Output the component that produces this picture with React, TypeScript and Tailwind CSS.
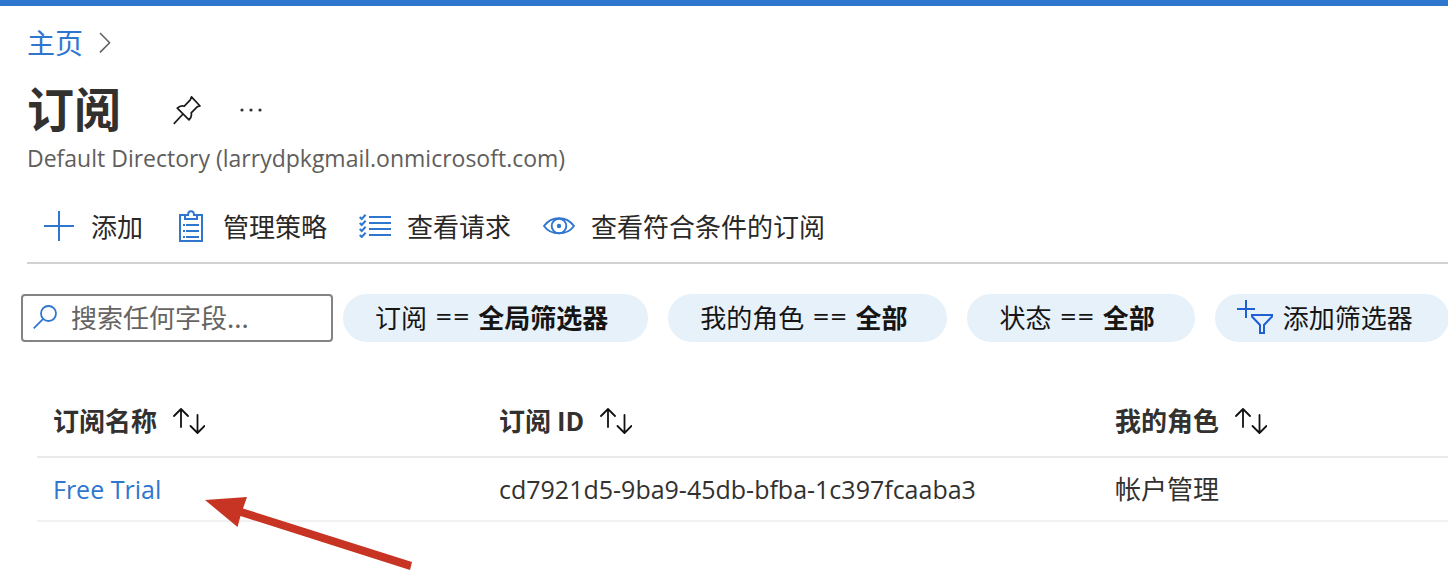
import type { ReactNode } from "react";

const sans = "font-['Open_Sans','Noto_Sans_CJK_SC',sans-serif]";
const cjk = "font-['Noto_Sans_CJK_SC',sans-serif]";

function PinIcon() {
  return (
    <svg width="28" height="30" viewBox="0 0 28 30" fill="none" stroke="#1b1a19" strokeWidth="1.7" strokeLinejoin="round" aria-hidden="true">
      <path d="M18.5 1.8 27 11l-2.6.6-6.2 6.3c.7 2.4.1 4.6-2.200 7L4.300 13.200c2-2 4.400-2.800 7-2l6-6.400z" />
      <path d="M10 19 .8 28.800" />
    </svg>
  );
}

function PlusIcon() {
  return (
    <svg width="30" height="30" viewBox="0 0 30 30" aria-hidden="true">
      <path d="M14 0h2v14h14v2H16v14h-2V16H0v-2h14z" fill="#2f76cf" />
    </svg>
  );
}

function ClipboardIcon() {
  return (
    <svg width="24" height="32" viewBox="0 0 24 32" fill="none" stroke="#2f76cf" strokeWidth="2" aria-hidden="true">
      <path d="M6 5H1v26h22V5h-5" />
      <path d="M6 9V5h3c0-5 6-5 6 0h3v4z" />
      <path d="M4 15h2m1 0h13M4 21h2m1 0h13M4 27h2m1 0h13" />
    </svg>
  );
}

function ChecklistIcon() {
  return (
    <svg width="32" height="24" viewBox="0 0 32 24" fill="none" stroke="#2f76cf" strokeWidth="2" aria-hidden="true">
      <path d="M10 3h22M10 9h22M10 15h22M10 21h22" />
      <path d="m.7 3 2 2L6.600.8M.7 9l2 2 3.900-4.200M.7 15l2 2 3.900-4.200M.7 21l2 2 3.900-4.200" strokeWidth="2" />
    </svg>
  );
}

function EyeIcon() {
  return (
    <svg width="32" height="18" viewBox="0 0 32 18" fill="none" stroke="#2f76cf" strokeWidth="1.900" aria-hidden="true">
      <path d="M1 9C5 3.500 10 1.200 16 1.200S27 3.500 31 9c-4 5.500-9 7.400-15 7.400S5 14.500 1 9z" />
      <circle cx="16" cy="9" r="7.300" />
      <circle cx="16" cy="9" r="2.200" fill="#2f76cf" stroke="none" />
    </svg>
  );
}

function SearchIcon() {
  return (
    <svg width="24" height="24" viewBox="0 0 24 24" fill="none" stroke="#2f76cf" strokeWidth="1.800" aria-hidden="true">
      <circle cx="15.500" cy="8.500" r="7.500" />
      <path d="M10.200 13.800.7 23.300" />
    </svg>
  );
}

function AddFilterIcon() {
  return (
    <svg width="36" height="34" viewBox="0 0 36 34" fill="none" stroke="#1f5fd6" strokeWidth="2" aria-hidden="true">
      <path d="M9 0v18M0 9h18" />
      <path d="M15 15h20v1.500l-8 8.500v8h-4v-8l-8-8.500z" />
    </svg>
  );
}

function SortIcon() {
  return (
    <svg width="32" height="26" viewBox="0 0 32 26" fill="none" stroke="#111" strokeWidth="1.800" strokeLinecap="round" strokeLinejoin="round" aria-hidden="true">
      <path d="M8 19V1.200M1 8l7-7 7 7" />
      <path d="M24.500 7v17.700M17.500 18l7 7 7-7" />
    </svg>
  );
}

function Command({ icon, label }: { icon: ReactNode; label: string }) {
  return (
    <button type="button" className="flex shrink-0 items-center gap-4 text-[26px] leading-8 text-[#292827]">
      <span className="flex w-8 justify-center">{icon}</span>
      <span>{label}</span>
    </button>
  );
}

function Filter({ name, value }: { name: string; value: string }) {
  return (
    <button type="button" className="mr-5 flex h-12 shrink-0 items-center gap-2 rounded-full bg-[#e7f1fa] pr-10 pb-[2px] pl-8 text-[26px] leading-8 whitespace-nowrap text-[#161514]">
      <span>{name}</span>
      <span className="font-['DejaVu_Sans',sans-serif] text-[21px]">==</span>
      <b className="font-bold">{value}</b>
    </button>
  );
}

function HeaderCell({ label }: { label: string }) {
  return (
    <th scope="col" className="h-[72px] pl-4 text-left font-bold">
      <button type="button" className="flex items-center gap-4 leading-8">
        <span className="pb-[2px]">{label}</span>
        <SortIcon />
      </button>
    </th>
  );
}

export default function App() {
  return (
    <div className={`relative min-h-screen overflow-hidden bg-white text-[#323130] ${cjk}`}>
      <div className="h-[6px] bg-[#2f76cf]" />

      <nav aria-label="Breadcrumb" className="mt-5 flex items-center gap-4 pl-[27px]">
        <a href="#home" className="text-[28px] leading-8 text-[#2f76cf]">主页</a>
        <svg width="12" height="22" viewBox="0 0 12 22" fill="none" stroke="#605e5c" strokeWidth="1.500" aria-hidden="true">
          <path d="m1 2 9.600 9.700L1 21.400" />
        </svg>
      </nav>

      <header className="pl-[27px]">
        <div className="mt-5 flex h-16 items-center">
          <h1 className="pb-[6px] text-[47px] leading-[58px] font-bold">订阅</h1>
          <button type="button" aria-label="Pin" className="ml-[52px]">
            <PinIcon />
          </button>
          <button type="button" aria-label="More" className="ml-[39px]">
            <svg width="22" height="4" viewBox="0 0 22 4" fill="#323130" aria-hidden="true">
              <circle cx="2" cy="2" r="1.600" />
              <circle cx="11" cy="2" r="1.600" />
              <circle cx="20" cy="2" r="1.600" />
            </svg>
          </button>
        </div>
        <p className={`text-[23px] leading-8 text-[#605e5c] ${sans}`}>Default Directory (larrydpkgmail.onmicrosoft.com)</p>
      </header>

      <div role="toolbar" className="mt-4 ml-[27px] flex h-[74px] items-center gap-8 border-b-2 border-[#d2d2d2] pl-4">
        <Command icon={<PlusIcon />} label="添加" />
        <Command icon={<ClipboardIcon />} label="管理策略" />
        <Command icon={<ChecklistIcon />} label="查看请求" />
        <Command icon={<EyeIcon />} label="查看符合条件的订阅" />
      </div>

      <div className="mt-[30px] flex pl-[21px]">
        <label className="mr-[10px] flex h-12 w-[312px] shrink-0 items-center gap-[14px] rounded border-2 border-[#858381] pb-[2px] pl-[10px]">
          <SearchIcon />
          <input type="text" aria-label="搜索" placeholder="搜索任何字段..." className="min-w-0 flex-1 text-[26px] leading-8 outline-none placeholder:text-[#666462]" />
        </label>
        <Filter name="订阅" value="全局筛选器" />
        <Filter name="我的角色" value="全部" />
        <Filter name="状态" value="全部" />
        <button type="button" className="flex h-12 shrink-0 items-center gap-[10px] rounded-full bg-[#e7f1fa] pr-9 pb-[2px] pl-[22px] text-[26px] leading-8 text-[#161514]">
          <AddFilterIcon />
          <span>添加筛选器</span>
        </button>
      </div>

      <div className="mt-[43px] pl-[37px]">
        <table className="w-full table-fixed border-collapse text-[26px] leading-8">
          <colgroup>
            <col className="w-[446px]" />
            <col className="w-[616px]" />
            <col />
          </colgroup>
          <thead>
            <tr className="border-b-2 border-[#eaeaea]">
              <HeaderCell label="订阅名称" />
              <HeaderCell label="订阅 ID" />
              <HeaderCell label="我的角色" />
            </tr>
          </thead>
          <tbody>
            <tr className="border-b-2 border-[#f1f1f1]">
              <td className={`h-16 pl-4 text-[25px] ${sans}`}>
                <a href="#free-trial" className="text-[#2f76cf]">Free Trial</a>
              </td>
              <td className={`pl-4 text-[25px] ${sans}`}>cd7921d5-9ba9-45db-bfba-1c397fcaaba3</td>
              <td className="pb-[2px] pl-4">帐户管理</td>
            </tr>
          </tbody>
        </table>
      </div>

      <svg className="pointer-events-none absolute top-[496px] left-[205px]" width="208" height="76" viewBox="0 0 208 76" aria-hidden="true">
        <path d="M0 4 42 1l-4 11.500L207 66l-2 8L35.500 20 32.500 31z" fill="#c83423" />
      </svg>
    </div>
  );
}
